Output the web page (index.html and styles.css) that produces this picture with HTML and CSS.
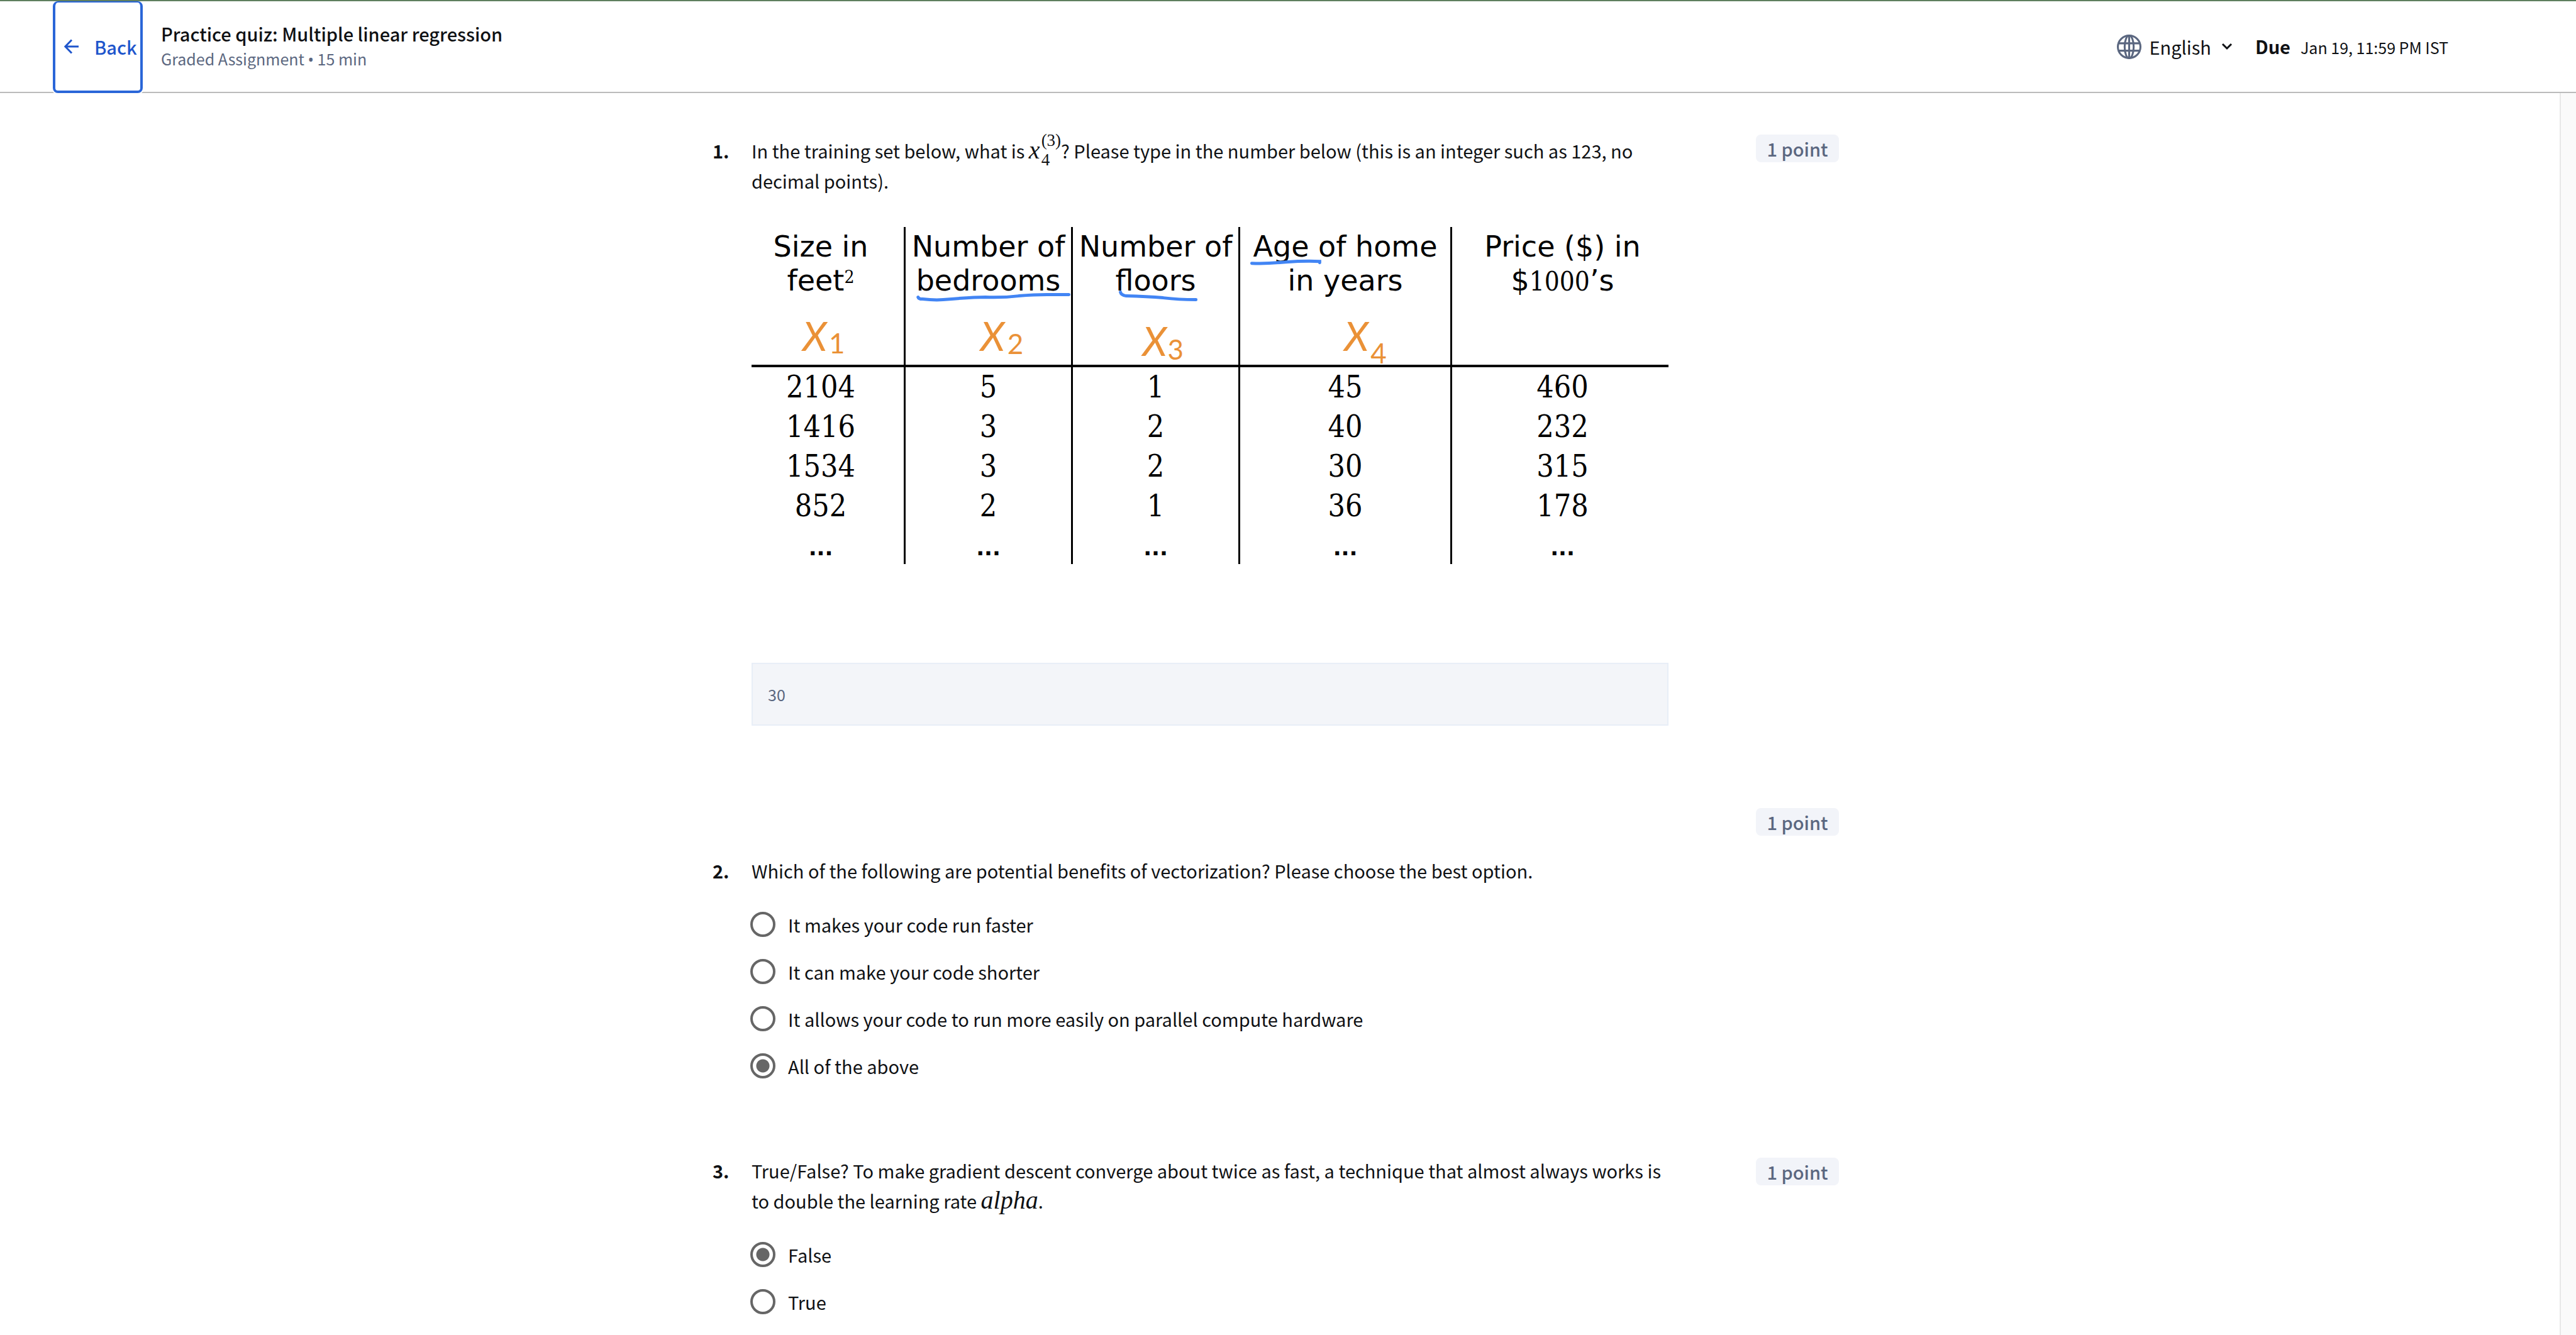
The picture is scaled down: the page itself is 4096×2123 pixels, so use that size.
FILE: index.html
```html
<!DOCTYPE html>
<html lang="en">
<head>
<meta charset="utf-8">
<title>Practice quiz: Multiple linear regression</title>
<link rel="stylesheet" href="styles.css">
</head>
<body>
<header class="topbar">
  <button class="back" type="button">
    <svg class="back-icon" viewBox="0 0 24 24" aria-hidden="true"><path d="M23 12H2M12 1.500L1.800 12L12 22.500"/></svg>
    <span>Back</span>
  </button>
  <div class="heading">
    <h1 class="title">Practice quiz: Multiple linear regression</h1>
    <p class="subtitle">Graded Assignment <span class="dot">•</span> 15 min</p>
  </div>
  <button class="language" type="button">
    <svg class="globe" viewBox="0 0 38 38" aria-hidden="true"><circle cx="19" cy="19" r="17.500"/><ellipse cx="19" cy="19" rx="7" ry="17.500"/><path d="M19 1.500V36.500M3 13.500H35M3 25H35"/></svg>
    <span>English</span>
    <svg class="chevron" viewBox="0 0 18 12" aria-hidden="true"><path d="M2 2L9 9L16 2"/></svg>
  </button>
  <p class="due"><strong class="due-label">Due</strong><span>Jan 19, 11:59 PM IST</span></p>
</header>

<div class="viewport">
  <main class="quiz">
    <section class="question question-first">
      <span class="number">1.</span>
      <div class="content">
        <p class="prompt prompt-math" id="q1">In the training set below, what is <span class="math"><i>x</i><span class="scripts"><span>(3)</span><span>4</span></span></span>? Please type in the number below (this is an integer such as 123, no decimal points).</p>
        <div class="figure">
          <table class="data">
            <colgroup><col class="col-size"><col class="col-count"><col class="col-count"><col class="col-age"><col class="col-price"></colgroup>
            <thead>
              <tr><th>Size in<br>feet<span class="square">2</span></th><th>Number of<br>bedrooms</th><th>Number of<br>floors</th><th>Age of home<br>in years</th><th>Price ($) in<br>$<span class="thousand">1000</span>’s</th></tr>
            </thead>
            <tbody>
              <tr><td>2104</td><td>5</td><td>1</td><td>45</td><td>460</td></tr>
              <tr><td>1416</td><td>3</td><td>2</td><td>40</td><td>232</td></tr>
              <tr><td>1534</td><td>3</td><td>2</td><td>30</td><td>315</td></tr>
              <tr><td>852</td><td>2</td><td>1</td><td>36</td><td>178</td></tr>
              <tr class="more"><td>...</td><td>...</td><td>...</td><td>...</td><td>...</td></tr>
            </tbody>
          </table>
          <svg class="ink" viewBox="0 0 1459 535">
            <g class="ink-lines">
              <path d="M265 111Q266 114 272 114Q290 116 305 115Q350 111 372 111Q400 112 425 109Q450 107 470 107H505"/>
              <path d="M587 103Q588 108 596 109Q630 110 655 112Q680 115 707 115"/>
              <path d="M796 57Q820 58 850 55Q880 53 904 54V56"/>
            </g>
            <g class="ink-text">
              <text x="81" y="196">X</text><text class="ink-sub" x="123" y="200">1</text>
              <text x="364" y="196">X</text><text class="ink-sub" x="407" y="201">2</text>
              <text x="622" y="204">X</text><text class="ink-sub" x="662" y="210">3</text>
              <text x="943" y="196">X</text><text class="ink-sub" x="985" y="216">4</text>
            </g>
          </svg>
        </div>
        <input class="answer" type="text" value="30" aria-labelledby="q1" readonly>
      </div>
      <span class="points">1 point</span>
    </section>

    <section class="question question-second">
      <span class="number">2.</span>
      <div class="content">
        <p class="prompt" id="q2">Which of the following are potential benefits of vectorization? Please choose the best option.</p>
        <div class="options" role="radiogroup" aria-labelledby="q2">
          <label class="option"><input class="radio" type="radio" name="q2"><span>It makes your code run faster</span></label>
          <label class="option"><input class="radio" type="radio" name="q2"><span>It can make your code shorter</span></label>
          <label class="option"><input class="radio" type="radio" name="q2"><span>It allows your code to run more easily on parallel compute hardware</span></label>
          <label class="option"><input class="radio" type="radio" name="q2" checked><span>All of the above</span></label>
        </div>
      </div>
      <span class="points">1 point</span>
    </section>

    <section class="question question-third">
      <span class="number">3.</span>
      <div class="content">
        <p class="prompt" id="q3">True/False? To make gradient descent converge about twice as fast, a technique that almost always works is to double the learning rate <span class="math"><i>alpha</i></span>.</p>
        <div class="options" role="radiogroup" aria-labelledby="q3">
          <label class="option"><input class="radio" type="radio" name="q3" checked><span>False</span></label>
          <label class="option"><input class="radio" type="radio" name="q3"><span>True</span></label>
        </div>
      </div>
      <span class="points">1 point</span>
    </section>
  </main>
  <div class="gutter"></div>
</div>
</body>
</html>
```
FILE: styles.css
```css
* { box-sizing: border-box; }

body {
  margin: 0;
  min-height: 100vh;
  display: flex;
  flex-direction: column;
  background: #fff;
  color: #0f1114;
  font: 29px/48px "Noto Sans CJK SC", "Noto Sans", sans-serif;
}

h1, p { margin: 0; }
button { font: inherit; color: inherit; background: none; border: 0; padding: 0; }
svg { fill: none; stroke: currentColor; flex: none; }

/* Top bar */
.topbar {
  display: flex;
  align-items: center;
  height: 148px;
  padding: 0 203px 0 84px;
  border-top: 2px solid #5f7f5f;
  border-bottom: 2px solid #bbb;
}

.back {
  align-self: stretch;
  display: flex;
  align-items: center;
  gap: 24px;
  width: 143px;
  margin-bottom: -2px;
  padding-left: 14px;
  border: 4px solid #2a66d8;
  border-top-width: 2px;
  border-radius: 8px;
  background: #fff;
  box-shadow: 0 0 0 2px #fff;
  clip-path: inset(0 -2px -2px -2px);
  color: #1f56cc;
  font-weight: 500;
}
.back-icon { width: 24px; height: 24px; stroke-width: 3; }

.heading { flex: 1; margin-left: 29px; padding-bottom: 2px; }
.title { font-size: 29px; line-height: 40px; font-weight: 500; }
.subtitle { font-size: 25px; line-height: 40px; color: #5b6780; }
.dot { font-family: "Noto Sans", sans-serif; }

.language { display: flex; align-items: center; gap: 12px; }
.globe { width: 39px; height: 39px; color: #5b6780; stroke-width: 3; }
.chevron { width: 18px; height: 12px; margin-left: 4px; stroke-width: 3; }

.due { display: flex; align-items: baseline; gap: 16px; margin-left: 36px; font-size: 25px; }
.due-label { font-size: 29px; font-weight: 700; }

/* Scrolling area */
.viewport { flex: 1; display: flex; }
.gutter { width: 26px; background: #fafafa; border-left: 2px solid #e8e8e8; }

.quiz {
  flex: 1;
  max-width: 1804px;
  margin: 0 auto;
  padding: 62px 13px 0 0;
}

.question {
  display: grid;
  grid-template-columns: 62px minmax(0, 1fr) 132px;
  grid-template-areas: "number content points";
  align-items: start;
}
.number { grid-area: number; font-weight: 700; }
.content { grid-area: content; margin-right: 139px; }
.points {
  grid-area: points;
  margin-top: 4px;
  border-radius: 8px;
  background: #f2f4f9;
  color: #5b6780;
  font-weight: 500;
  line-height: 44px;
  text-align: center;
}

.question-first .number, .prompt-math { padding-top: 5px; }
.question-second {
  margin-top: 127px;
  grid-template-areas: ". . points" "number content .";
  row-gap: 31px;
}
.question-third { margin-top: 105px; }

.math { font-family: "Liberation Serif", serif; font-size: 40px; line-height: 0; white-space: nowrap; }
.scripts {
  display: inline-grid;
  height: 62px;
  margin: -16px 0 -16px 2px;
  font-size: 27px;
  line-height: 31px;
  vertical-align: 20px;
}

/* Housing table */
.figure { position: relative; margin-top: 50px; }
.data { width: 100%; table-layout: fixed; border-collapse: separate; border-spacing: 0; color: #000; }
.col-size { width: 242px; }
.col-count { width: 266px; }
.col-age { width: 337px; }
.col-price { width: auto; }
.data th, .data td { padding: 0; border-left: 3px solid #000; text-align: center; }
.data th:first-child, .data td:first-child { border-left: 0; padding-right: 22px; }
.data th:last-child, .data td:last-child { padding-left: 7px; }
.data th {
  height: 223px;
  padding-top: 4px;
  border-bottom: 4px solid #000;
  vertical-align: top;
  font: 46px/54px "DejaVu Sans", sans-serif;
  white-space: nowrap;
}
.data td { font: 48px/63px "DejaVu Serif Condensed", "DejaVu Serif", serif; }
.data .more td { padding-top: 9px; font: bold 34px/52px "DejaVu Sans", sans-serif; }
.square { font: 28px/28px "DejaVu Serif Condensed", "DejaVu Serif", serif; vertical-align: 12px; }
.thousand { font: 42px/48px "DejaVu Serif Condensed", "DejaVu Serif", serif; }

/* Pen marks over the table */
.ink { position: absolute; inset: 0; width: 100%; height: 100%; }
.ink-lines { stroke: #4285f4; stroke-width: 5; stroke-linecap: round; }
.ink-text { fill: #ea9137; stroke: none; font-family: Lato, sans-serif; font-size: 64px; font-style: italic; }
.ink-sub { font-size: 44px; font-style: normal; }

.answer {
  display: block;
  width: 100%;
  height: 100px;
  margin-top: 157px;
  padding: 0 24px;
  border: 2px solid #e8eef7;
  border-radius: 0;
  background: #f3f5f9;
  color: #5b6780;
  font: inherit;
  font-size: 25px;
}

/* Choices */
.options { margin-top: 24px; }
.option { display: flex; align-items: center; gap: 20px; height: 75px; }
.radio {
  appearance: none;
  width: 40px;
  height: 40px;
  margin: 0 0 0 -2px;
  border: 4px solid #666;
  border-radius: 50%;
}
.radio:checked { background: radial-gradient(circle, #666 10px, #fff 11px); }
```
